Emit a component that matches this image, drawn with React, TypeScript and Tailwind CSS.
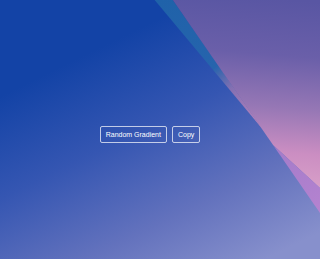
function Backdrop() {
  return (
    <svg
      className="absolute inset-0 h-full w-full"
      viewBox="0 0 300 259"
      preserveAspectRatio="none"
      aria-hidden
    >
      <defs>
        <linearGradient id="base" gradientUnits="userSpaceOnUse" x1="70" y1="60" x2="190" y2="290">
          <stop offset="0" stopColor="#1343a6" />
          <stop offset="0.35" stopColor="#3556b2" />
          <stop offset="0.7" stopColor="#6372bd" />
          <stop offset="1" stopColor="#8790cc" />
        </linearGradient>
        <linearGradient id="band" gradientUnits="userSpaceOnUse" x1="150" y1="0" x2="240" y2="125">
          <stop offset="0" stopColor="#1f62a9" />
          <stop offset="0.55" stopColor="#2664ad" />
          <stop offset="0.72" stopColor="#8470b2" />
          <stop offset="1" stopColor="#b482bc" />
        </linearGradient>
        <linearGradient id="plum" gradientUnits="userSpaceOnUse" x1="270" y1="0" x2="255" y2="185">
          <stop offset="0" stopColor="#5956a3" />
          <stop offset="0.3" stopColor="#6a5fa9" />
          <stop offset="0.58" stopColor="#9677b5" />
          <stop offset="0.82" stopColor="#cb8ec2" />
          <stop offset="1" stopColor="#d89fc8" />
        </linearGradient>
        <linearGradient id="lilac" gradientUnits="userSpaceOnUse" x1="256" y1="145" x2="300" y2="213">
          <stop offset="0" stopColor="#a37bc9" />
          <stop offset="1" stopColor="#b583d0" />
        </linearGradient>
      </defs>
      <rect width="300" height="259" fill="url(#base)" />
      <polygon points="145,0 162,0 246,129" fill="url(#band)" />
      <polygon points="162,0 300,0 300,188 256,145" fill="url(#plum)" />
      <polygon points="256,145 300,188 300,213" fill="url(#lilac)" />
    </svg>
  );
}

export default function App() {
  return (
    <div className="relative h-[259px] w-full overflow-hidden font-['Liberation_Sans',Arial,sans-serif]">
      <Backdrop />
      <div className="relative flex h-full w-[300px] items-center justify-center gap-[5px] pt-[9px]">
        <button
          type="button"
          className="flex h-[17px] items-center rounded-[2px] border border-white/70 px-[5px] text-[7px] leading-none text-white"
        >
          Random Gradient
        </button>
        <button
          type="button"
          className="flex h-[17px] items-center rounded-[2px] border border-white/70 px-[5px] text-[7px] leading-none text-white"
        >
          Copy
        </button>
      </div>
    </div>
  );
}
